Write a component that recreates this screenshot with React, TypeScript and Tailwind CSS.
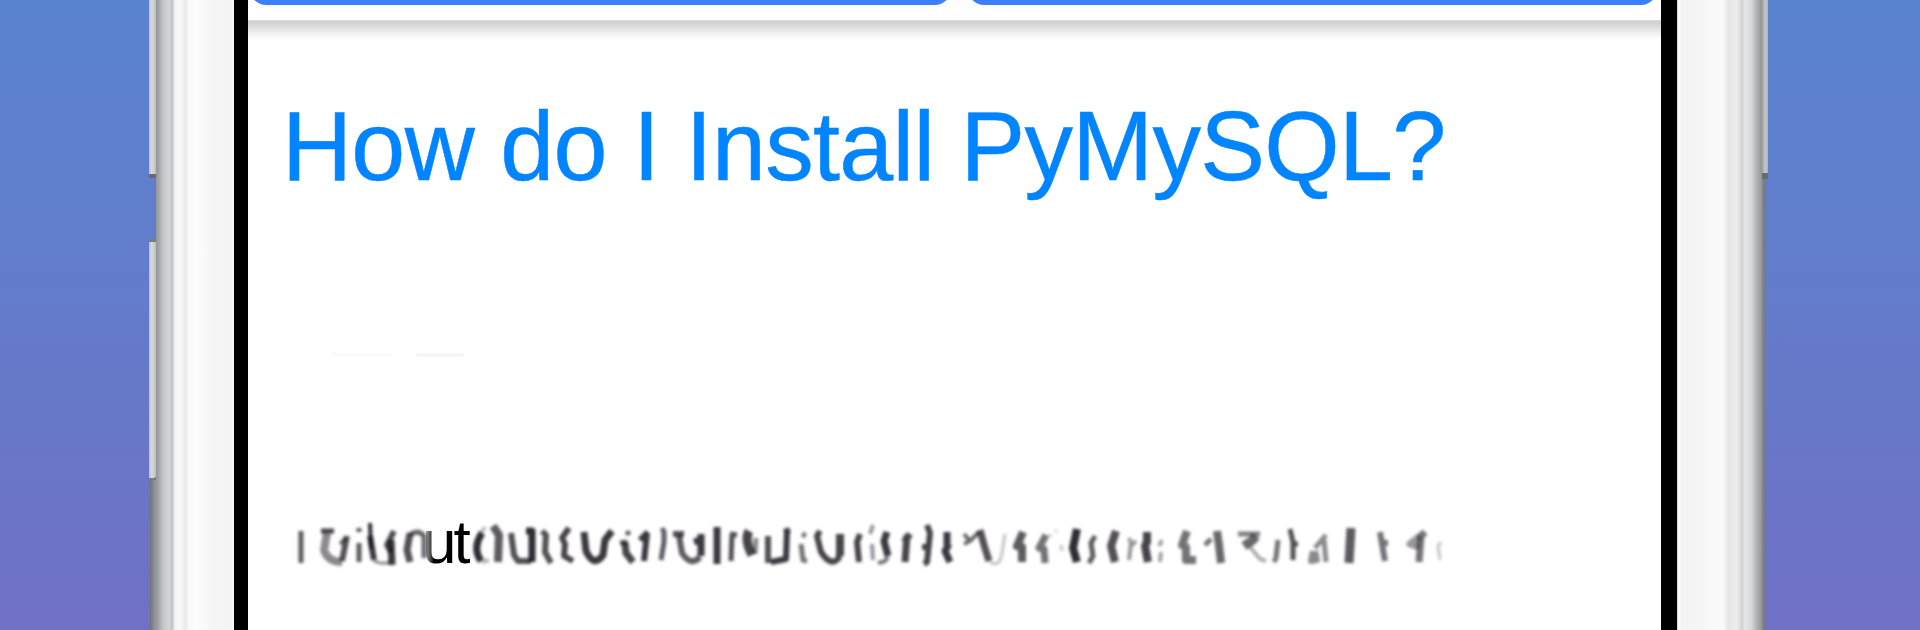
import React from "react";

// [path, opacity, stroke width] for the worn-out line of print, baseline at y=64
const leftMarks: [string, number, number][] = [
    ["M31 31V63", 0.7, 5],
    ["M51 31H64", 0.8, 5],
    ["M57 33L54 50Q58 62 72 62", 0.5, 8],
    ["M77 36L72 61", 0.75, 6],
    ["M70 44L76 38", 0.6, 4],
    ["M89 28V32M89 43V62", 0.7, 5],
    ["M100 23L101 49", 0.9, 4],
    ["M100 36L104 60", 0.85, 6],
    ["M104 61Q112 65 120 62", 0.5, 3],
    ["M124 31L117 45L121 52", 0.75, 6],
    ["M121 40L122 65", 0.85, 7],
    ["M140 33L137 50L140 62", 0.75, 7],
    ["M140 35Q148 29 154 36V58", 0.65, 5],
];

const rightMarks: [string, number, number][] = [
    ["M212 33Q202 48 211 61", 0.9, 7],
    ["M215 27L211 33M212 62L219 60", 0.3, 4],
    ["M223 26L229 35L228 62", 0.7, 8],
    ["M241 33L244 55L248 61L261 61", 0.75, 6],
    ["M256 31H262L262 62", 0.9, 7],
    ["M272 31L276 35L275 52L281 63", 0.75, 6],
    ["M299 28L292 38L295 44L294 56L303 61", 0.8, 6],
    ["M314 32L316 51Q324 68 333 55L335 40L342 31", 0.85, 7],
    ["M357 31L359 35M350 43L357 42", 0.7, 5],
    ["M355 42L356 53L363 62", 0.8, 7],
    ["M378 32L370 40M377 33L374 61", 0.85, 6],
    ["M392 28L394 32V42L391 60", 0.7, 5],
    ["M403 34H414", 0.75, 6],
    ["M409 35L412 53Q421 67 430 57", 0.7, 6],
    ["M424 42L431 40M431 34V56", 0.85, 7],
    ["M447 27V64", 0.85, 7],
    ["M460 34L467 35M462 34L461 61", 0.75, 5],
    ["M479 31Q474 40 482 55", 0.8, 9],
    ["M486 38L485 54", 0.5, 5],
    ["M498 36L498 63", 0.75, 6],
    ["M520 30L514 32M517 30L516 59L501 62", 0.85, 6],
    ["M532 34L536 36M531 44L533 60L537 61", 0.6, 5],
    ["M550 31L547 36L551 52Q562 69 570 56", 0.8, 6],
    ["M570 34V56", 0.8, 8],
    ["M590 34L587 42L589 62", 0.8, 6],
    ["M603 25L600 34M602 44L603 60", 0.45, 4],
    ["M608 62Q614 64 618 57", 0.6, 4],
    ["M617 32L614 41L618 56", 0.85, 7],
    ["M640 34L634 42M637 35L635 62", 0.8, 7],
    ["M657 25L660 33L657 62L654 64M652 47H660", 0.8, 6],
    ["M677 32V45M679 44L675 51L680 62", 0.85, 7],
    ["M694 44L700 41L709 32M694 34L700 41", 0.65, 4],
    ["M710 30L714 45L719 61", 0.75, 7],
    ["M720 62Q730 68 732 53L735 34", 0.25, 3],
    ["M753 32L747 46L752 47L752 62", 0.7, 8],
    ["M776 35L769 48L774 49L775 63", 0.6, 7],
    ["M787 31H785M780 37V34M791 45L792 51", 0.2, 4],
    ["M807 29L803 48L807 62", 0.9, 8],
    ["M825 36L821 43L823 56L819 63", 0.7, 5],
    ["M846 31L841 46L845 62", 0.75, 8],
    ["M859 38L861 43L859 60M861 46L866 41", 0.45, 4],
    ["M877 32V42L875 46L878 62", 0.8, 8],
    ["M892 40L889 46M891 52L890 62", 0.4, 4],
    ["M917 31L912 45L916 47L916 60H926", 0.6, 8],
    ["M935 45L941 39", 0.6, 5],
    ["M947 31L949 45L951 63", 0.65, 8],
    ["M968 34H990", 0.55, 5],
    ["M974 46L983 40L986 36", 0.65, 9],
    ["M980 47L990 59L996 61", 0.35, 4],
    ["M1008 40L1006 58L1004 62", 0.6, 5],
    ["M1020 29L1023 42L1023 60M1022 44H1028", 0.75, 5],
    ["M1056 35L1045 48M1054 40L1056 62", 0.5, 5],
    ["M1043 51L1041 61L1047 60L1045 51", 0.5, 6],
    ["M1081 28L1079 63", 0.7, 9],
    ["M1110 32L1112 44L1115 61M1114 43H1118", 0.6, 6],
    ["M1155 32L1151 36L1149 62", 0.6, 7],
    ["M1150 36L1140 44L1149 47", 0.45, 7],
    ["M1171 42L1168 46L1170 60", 0.25, 3],
];

const Marks = ({ marks, viewBox, className }: { marks: [string, number, number][]; viewBox: string; className: string }) => (
    <svg viewBox={viewBox} className={className} fill="none" stroke="#18141c" strokeLinejoin="round" aria-hidden="true">
        <g className="blur-[1.4px]">
            {marks.map(([d, opacity, width]) => (
                <path key={d} d={d} strokeOpacity={opacity} strokeWidth={width} />
            ))}
        </g>
    </svg>
);

export default function App() {
    return (
        <div className="flex h-[630px] w-[1920px] overflow-hidden bg-linear-to-b from-[#5983d0] via-[#637bca] via-50% to-[#7070c5] font-['Liberation_Sans',Arial,sans-serif]">
            {/* Left side buttons */}
            <div className="ml-[149px] flex w-[7px] shrink-0 flex-col">
                <div className="h-[178px] border-b-4 border-[#666b73] bg-linear-to-r from-[#b6bdca] via-[#dadada] via-40% to-[#bebebe]" />
                <div className="h-[61px]" />
                <div className="h-[241px] rounded-br-sm border-t-3 border-b-2 border-[#777b82] bg-linear-to-r from-[#b6bdca] via-[#dadada] via-40% to-[#bebebe]" />
                <div className="ml-px flex-1 bg-linear-to-r from-[#70747b] to-[#999c9f]" />
            </div>

            {/* Left bezel */}
            <div className="w-[78px] shrink-0 bg-[linear-gradient(90deg,#929496_0px,#a5a7aa_3px,#c2c4c6_7px,#d4d6d8_13px,#bfc2c4_16px,#f3f3f3_19px,#f7f7f7_25px,#e9e9e9_29px,#fafafa_33px,#fdfdfd_42px,#f5f5f5_56px,#f4f4f4_76px,#ffffff_78px)]" />

            {/* Screen */}
            <main className="flex w-[1443px] shrink-0 flex-col border-l-14 border-r-16 border-black bg-white">
                <header className="flex h-5 shrink-0 justify-between bg-white pr-1 pl-0.5">
                    <div className="-mt-9 h-[41px] w-[701px] rounded-2xl bg-[#397fff]" />
                    <div className="-mt-9 h-[41px] w-[689px] rounded-2xl bg-[#397fff]" />
                </header>
                <div className="h-5 shrink-0 bg-[linear-gradient(180deg,#dcdcdc_0px,#d0d0d0_2px,#dadada_6px,#ececec_12px,#f9f9f9_17px,#ffffff_20px)]" />

                <h1 className="mt-[46px] ml-[34px] h-[120px] origin-left scale-y-102 text-[97px] leading-[120px] tracking-[-0.68px] whitespace-nowrap text-[#0084ff] [-webkit-text-stroke:0.5px_#0084ff]">
                    How do I Install PyMySQL?
                </h1>

                {/* Faded traces of the first paragraph */}
                <div className="mt-[78px] flex h-14 items-start justify-end pr-20 text-[48px] leading-14 text-black/[0.01]">you</div>
                <div className="ml-[84px] flex h-4 items-end gap-6 blur-[1px]">
                    <div className="h-0.5 w-[60px] bg-black/[0.03]" />
                    <div className="h-0.5 w-12 bg-black/[0.07]" />
                </div>

                <div className="mt-[144px] ml-[22px] flex h-[100px] shrink-0">
                    <Marks marks={leftMarks} viewBox="0 0 152 100" className="h-[100px] w-[152px] shrink-0 overflow-visible" />
                    <p className="w-[48px] shrink-0 text-[62px] leading-[84px] tracking-[-3px] text-black [mask-image:linear-gradient(90deg,transparent_0px,black_12px)]">
                        ut
                    </p>
                    <Marks marks={rightMarks} viewBox="200 0 990 100" className="h-[100px] w-[990px] shrink-0" />
                </div>
            </main>

            {/* Right bezel */}
            <div className="w-[85px] shrink-0 bg-[linear-gradient(90deg,#d5d5d5_0px,#ffffff_2px,#f4f4f4_4px,#f5f5f5_25px,#fbfbfb_40px,#f8f8f8_47px,#e5e5e5_51px,#ececec_60px,#d0d2d4_65px,#e4e6e8_68px,#d8dadc_74px,#b0b2b4_80px,#929496_85px)]" />

            {/* Right side button */}
            <div className="flex w-[6px] shrink-0 flex-col">
                <div className="h-[179px] border-b-6 border-[#666b70] bg-linear-to-r from-[#9b9d9e] via-[#c6c7c8] to-[#aab6c8]" />
                <div className="mr-[2px] flex-1 bg-linear-to-r from-[#85888b] to-[#6f7786]" />
            </div>
        </div>
    );
}
